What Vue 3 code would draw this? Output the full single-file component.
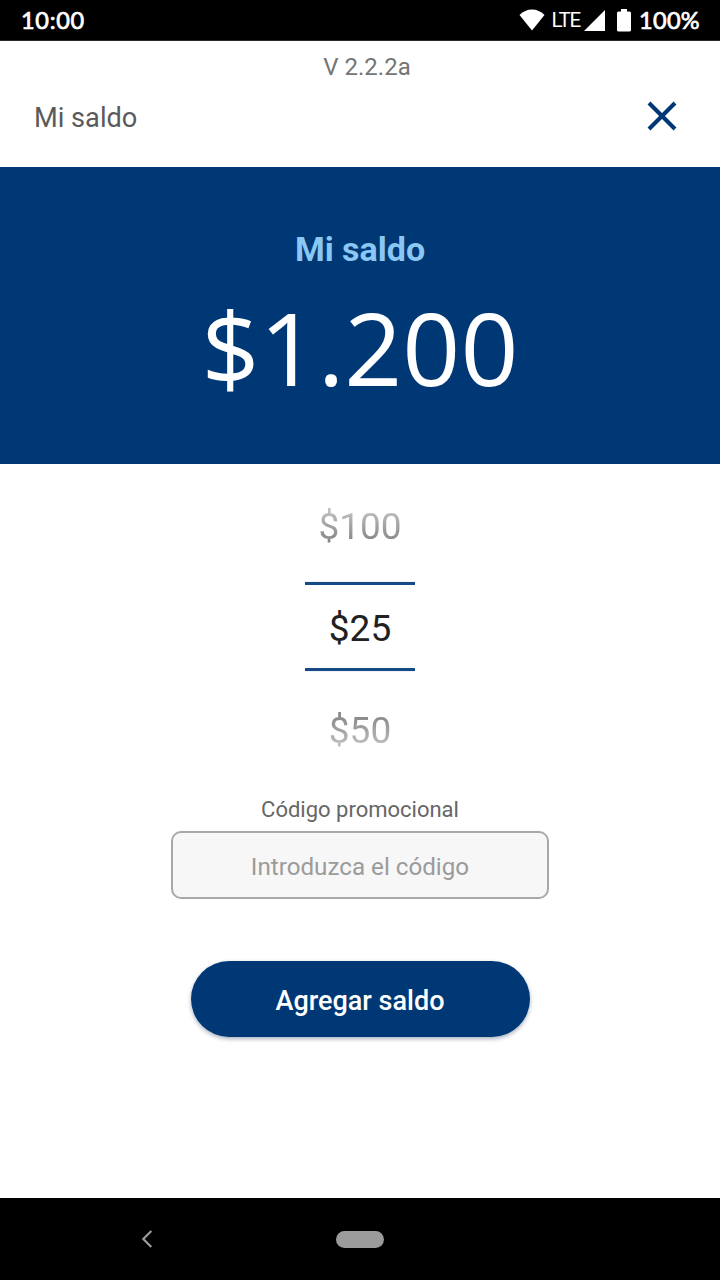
<script setup>
import { ref } from 'vue'

const version = 'V 2.2.2a'
const saldo = ref('$1.200')
const codigo = ref('')

// montos visibles en el selector
const montos = ref([
  { texto: '$100', clase: 'before' },
  { texto: '$25', clase: 'selected' },
  { texto: '$50', clase: 'after' },
])
</script>

<template>
  <div class="screen">
    <div class="status-bar">
      <span class="clock">10:00</span>
      <div class="status-icons">
        <svg class="wifi" width="26" height="22" viewBox="0 0 26 22">
          <path d="M13 21.5 L0.5 6 Q6 0.5 13 0.5 Q20 0.5 25.5 6 Z" fill="#fff" />
        </svg>
        <span class="lte">LTE</span>
        <svg class="signal" width="21" height="21" viewBox="0 0 21 21">
          <path d="M21 0 V21 H0 Z" fill="#fff" />
        </svg>
        <svg class="battery" width="14" height="23" viewBox="0 0 14 23">
          <path
            d="M4 0 H10 V2.5 H12.5 Q14 2.5 14 4 V21 Q14 22.5 12.5 22.5 H1.5 Q0 22.5 0 21 V4 Q0 2.5 1.5 2.5 H4 Z"
            fill="#fff"
          />
        </svg>
        <span class="percent">100%</span>
      </div>
    </div>

    <header class="header">
      <p class="version">{{ version }}</p>
      <div class="title-row">
        <h1>Mi saldo</h1>
        <button class="close" aria-label="Cerrar">
          <svg width="30" height="30" viewBox="0 0 30 30">
            <path d="M2 2 L28 28 M28 2 L2 28" stroke="#003876" stroke-width="4.1" />
          </svg>
        </button>
      </div>
    </header>

    <section class="balance">
      <h2>Mi saldo</h2>
      <p class="amount">{{ saldo }}</p>
    </section>

    <main class="content">
      <div class="picker">
        <div v-for="monto in montos" :key="monto.texto" class="option" :class="monto.clase">
          <span>{{ monto.texto }}</span>
        </div>
      </div>

      <label class="promo-label" for="codigo">Código promocional</label>
      <input
        id="codigo"
        v-model="codigo"
        class="promo-input"
        type="text"
        placeholder="Introduzca el código"
      />

      <button class="btn">Agregar saldo</button>
    </main>

    <nav class="nav-bar">
      <svg class="back" width="12" height="18" viewBox="0 0 12 18">
        <path d="M10.3 1 L2.3 9 L10.3 17" fill="none" stroke="#9b9b9b" stroke-width="2.2" />
      </svg>
      <span class="home"></span>
    </nav>
  </div>
</template>

<style>
body {
  margin: 0;
  background: #fff;
}
</style>

<style scoped>
.screen {
  display: flex;
  flex-direction: column;
  width: 720px;
  height: 1280px;
  overflow: hidden;
  background: #fff;
  font-family: Roboto, sans-serif;
}

h1,
h2,
p {
  margin: 0;
  font-weight: 400;
}

/* --- BARRA DE ESTADO --- */
.status-bar {
  display: flex;
  justify-content: space-between;
  align-items: center;
  box-sizing: border-box;
  height: 41px;
  padding: 0 20px 0 21px;
  background: #000;
  border-bottom: 1px solid #2b2b2b;
  color: #fff;
}

.clock,
.percent {
  font-family: Lato, sans-serif;
  font-size: 23.5px;
  font-weight: 400;
  line-height: 40px;
  -webkit-text-stroke: 0.7px #fff;
}

.clock {
  letter-spacing: 0.7px;
}

.percent {
  letter-spacing: 0.3px;
}

.status-icons {
  display: flex;
  align-items: center;
}

.lte {
  margin: 0 4px 0 6px;
  font-size: 20.5px;
  font-weight: 400;
  line-height: 40px;
  letter-spacing: -1.2px;
}

.battery {
  margin: 0 8px 0 12px;
}

/* --- CABECERA --- */
.header {
  box-sizing: border-box;
  height: 126px;
  padding-top: 11px;
}

.version {
  padding-left: 14px;
  font-size: 24px;
  line-height: 30px;
  text-align: center;
  color: #757575;
}

.title-row {
  display: flex;
  justify-content: space-between;
  align-items: center;
  height: 71px;
  padding: 0 43px 0 34px;
}

.title-row h1 {
  font-size: 27.2px;
  color: #5a5a5a;
}

.close {
  height: 30px;
  margin-bottom: 3px;
  padding: 0;
  border: none;
  background: none;
}

.close svg {
  display: block;
}

/* --- SALDO --- */
.balance {
  box-sizing: border-box;
  height: 297px;
  padding-top: 62px;
  background: #003876;
  text-align: center;
}

.balance h2 {
  font-size: 34px;
  font-weight: 700;
  line-height: 40px;
  color: #8ac7f2;
}

.amount {
  margin-top: 18px;
  font-family: 'Open Sans', 'Noto Sans', sans-serif;
  font-size: 101.5px;
  line-height: 120px;
  color: #fff;
}

/* --- CONTENIDO --- */
.content {
  flex: 1;
  display: flex;
  flex-direction: column;
  align-items: center;
  padding-top: 11px;
}

.picker {
  width: 110px;
}

.option {
  height: 102px;
  font-size: 37px;
  line-height: 104px;
  text-align: center;
}

.before span,
.after span {
  display: block;
  color: transparent;
  background-clip: text;
  -webkit-background-clip: text;
}

.before span {
  background-image: linear-gradient(to bottom, #c4c4c4 32%, #828282 66%);
}

.after span {
  background-image: linear-gradient(to bottom, #858585 34%, #c4c4c4 66%);
}

.selected {
  box-sizing: border-box;
  padding: 5px 0 8px;
  color: #212121;
}

.selected span {
  display: block;
  box-sizing: border-box;
  height: 89px;
  border-top: 3px solid #164a86;
  border-bottom: 3px solid #164a86;
  box-shadow: 0 0 1px rgba(22, 74, 134, 0.4);
  clip-path: inset(-1px 0);
  line-height: 87px;
}

.promo-label {
  margin-top: 16px;
  font-size: 22px;
  line-height: 26px;
  color: #666;
}

.promo-input {
  box-sizing: border-box;
  width: 378px;
  height: 68px;
  margin-top: 8px;
  padding: 3px 0 0;
  border: 2px solid #a9a9a9;
  border-radius: 10px;
  background: #f7f7f7;
  font-family: inherit;
  font-size: 24.2px;
  text-align: center;
  color: #212121;
}

.promo-input::placeholder {
  color: #9b9b9b;
}

.btn {
  width: 339px;
  height: 75.5px;
  margin-top: 62.4px;
  padding: 3px 0 0;
  border: none;
  border-radius: 38px;
  background: #003876;
  box-shadow: 0 2px 4px rgba(0, 30, 70, 0.35);
  font-family: inherit;
  font-size: 27px;
  font-weight: 500;
  color: #fff;
}

/* --- NAVEGACIÓN --- */
.nav-bar {
  display: grid;
  grid-template-columns: 294px 132px 294px;
  justify-items: center;
  align-items: center;
  height: 82px;
  background: #000;
}

.home {
  width: 48px;
  height: 17px;
  border-radius: 9px;
  background: #9b9b9b;
}
</style>
